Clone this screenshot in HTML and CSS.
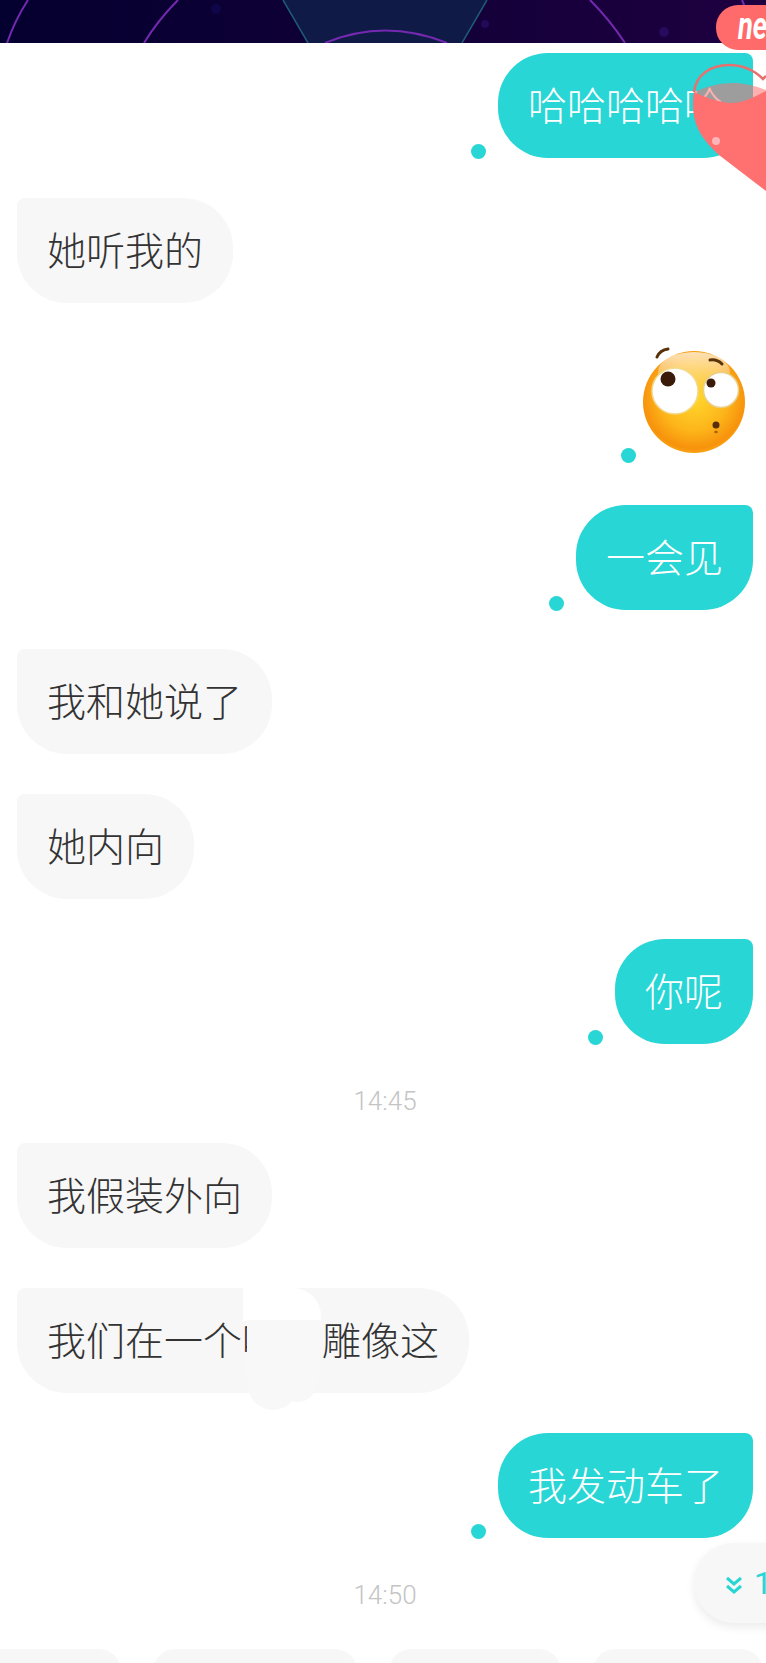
FILE: index.html
```html
<!DOCTYPE html>
<html lang="zh-CN">
<head>
    <meta charset="UTF-8">
    <meta name="viewport" content="width=device-width, initial-scale=1.0">
    <title>Chat</title>
    <link rel="stylesheet" href="styles.css">
</head>
<body>
    <div class="page">
        <div class="chat-header">
            <svg class="header-art" width="766" height="43" viewBox="0 0 766 43">
                <defs>
                    <linearGradient id="headerBg" x1="0" y1="0" x2="1" y2="0">
                        <stop offset="0" stop-color="#04002f"/>
                        <stop offset="1" stop-color="#1e0040"/>
                    </linearGradient>
                </defs>
                <rect width="766" height="43" fill="url(#headerBg)"/>
                <path d="M283 0 L308 43 L462 43 L487 0 Z" fill="#0f1a46"/>
                <path d="M283 0 L308 43 M487 0 L462 43" class="art-teal"/>
                <path d="M28 0 Q15 20 7 43" class="art-arc"/>
                <path d="M178 0 Q158 20 144 43" class="art-arc"/>
                <path d="M325 43 Q385 18 447 43" class="art-arc"/>
                <path d="M590 0 Q610 20 625 43" class="art-arc"/>
                <path d="M742 0 L747 12" class="art-arc"/>
                <circle cx="216" cy="9" r="5" fill="#0e0648"/>
                <circle cx="485" cy="24" r="4" fill="#220a58"/>
                <circle cx="664" cy="32" r="5" fill="#260a5e"/>
            </svg>
        </div>

        <div class="chat-messages">
            <div class="row sent">
                <span class="read-dot"></span>
                <div class="bubble sent-bubble">哈哈哈哈哈</div>
            </div>
            <div class="row received">
                <div class="bubble received-bubble">她听我的</div>
            </div>
            <div class="row sent row-emoji">
                <span class="read-dot emoji-dot"></span>
                <svg class="emoji" width="104" height="104" viewBox="0 0 104 104">
                    <defs>
                        <radialGradient id="faceFill" cx="0.5" cy="0.45" r="0.55">
                            <stop offset="0" stop-color="#ffd92e"/>
                            <stop offset="0.6" stop-color="#fdb51a"/>
                            <stop offset="0.92" stop-color="#f7920c"/>
                            <stop offset="1" stop-color="#f9a414"/>
                        </radialGradient>
                        <linearGradient id="faceShine" x1="0" y1="0" x2="0" y2="1">
                            <stop offset="0" stop-color="#fff" stop-opacity="0.7"/>
                            <stop offset="1" stop-color="#fff" stop-opacity="0"/>
                        </linearGradient>
                    </defs>
                    <circle cx="52" cy="52" r="51" fill="url(#faceFill)"/>
                    <ellipse cx="52" cy="22" rx="36" ry="20" fill="url(#faceShine)"/>
                    <circle cx="33" cy="41" r="23" fill="#fff" stroke="#f3d98e" stroke-width="1.5"/>
                    <circle cx="79" cy="40" r="17.5" fill="#fff" stroke="#e9d08a" stroke-width="1.5"/>
                    <circle cx="26" cy="29" r="7.5" fill="#3a1a08"/>
                    <circle cx="69" cy="33" r="4.5" fill="#3a1a08"/>
                    <circle cx="74" cy="75" r="3.5" fill="#5a2c08"/>
                    <ellipse cx="74" cy="82" rx="1.8" ry="1.2" fill="#a8620c"/>
                    <path d="M15 7 Q18 0 26 -1" class="brow"/>
                    <path d="M68 10 Q75 9 80 14" class="brow"/>
                </svg>
            </div>
            <div class="row sent row-after-emoji">
                <span class="read-dot"></span>
                <div class="bubble sent-bubble">一会见</div>
            </div>
            <div class="row received row-tight">
                <div class="bubble received-bubble">我和她说了</div>
            </div>
            <div class="row received">
                <div class="bubble received-bubble">她内向</div>
            </div>
            <div class="row sent">
                <span class="read-dot"></span>
                <div class="bubble sent-bubble">你呢</div>
            </div>
            <div class="time">14:45</div>
            <div class="row received row-first">
                <div class="bubble received-bubble">我假装外向</div>
            </div>
            <div class="row received">
                <div class="bubble received-bubble">我们在一个<span class="covered-text">喷泉</span>雕像这</div>
            </div>
            <div class="row sent">
                <span class="read-dot"></span>
                <div class="bubble sent-bubble">我发动车了</div>
            </div>
            <div class="time">14:50</div>
        </div>

        <div class="quick-replies">
            <div class="chip chip-first"></div>
            <div class="chip chip-second"></div>
            <div class="chip chip-third"></div>
            <div class="chip chip-fourth"></div>
        </div>

        <div class="new-badge"><span class="new-badge-text">ne</span></div>

        <svg class="heart" width="76" height="132" viewBox="0 0 76 132">
            <path d="M4 32 C6 14 22 5 39 5 C52 5 64 10 73 19 L76 16" class="heart-line"/>
            <path d="M4 32 C18 26 30 23 43 23 C54 23 66 26 76 30 L76 50 L4 50 Z" class="heart-lobe"/>
            <path d="M4 32 C10 35 28 43 42 43 C54 43 66 36 76 31 L76 131 L29 95 C15 82 3 68 3 45 C3 40 3 36 4 32 Z" class="heart-body"/>
            <circle cx="26" cy="81" r="4" class="heart-dot"/>
        </svg>

        <div class="censor censor-top"></div>
        <div class="censor censor-bottom"></div>
        <div class="censor censor-foot-left"></div>
        <div class="censor censor-foot-right"></div>

        <div class="new-messages">
            <svg class="chevrons" width="18" height="18" viewBox="0 0 18 18">
                <path d="M2 2 L9 8 L16 2 M2 10 L9 16 L16 10"/>
            </svg>
            <span>1</span>
        </div>
    </div>
</body>
</html>
```

FILE: styles.css
```css
* {
    margin: 0;
    padding: 0;
    box-sizing: border-box;
}

body {
    background-color: #fff;
    font-family: "Noto Sans CJK SC", "Noto Sans", sans-serif;
}

.page {
    position: relative;
    width: 766px;
    height: 1663px;
    overflow: hidden;
}

.chat-header {
    height: 43px;
}

.header-art {
    display: block;
}

.art-arc {
    fill: none;
    stroke: #7429b0;
    stroke-width: 2;
}

.art-teal {
    fill: none;
    stroke: #1f5a78;
    stroke-width: 1.5;
}

.chat-messages {
    display: flex;
    flex-direction: column;
    height: 1606px;
    padding: 10px 13px 0 17px;
}

.row {
    display: flex;
    align-items: flex-end;
    margin-top: 40px;
}

.row:first-child {
    margin-top: 0;
}

.row.row-first {
    margin-top: 0;
}

.row.row-tight {
    margin-top: 39px;
}

.row.row-emoji {
    margin-top: 47px;
}

.row.row-after-emoji {
    margin-top: 51px;
}

.sent {
    justify-content: flex-end;
    gap: 12px;
}

.received {
    justify-content: flex-start;
}

.bubble {
    height: 105px;
    padding: 0 30px;
    font-size: 39px;
    font-weight: 300;
    line-height: 101px;
    white-space: nowrap;
}

.sent-bubble {
    background-color: #27d6d5;
    color: #fff;
    border-radius: 50px 8px 50px 50px;
}

.received-bubble {
    background-color: #f7f7f7;
    color: #333;
    border-radius: 8px 50px 50px 50px;
}

.covered-text {
    margin-right: 2px;
}

.read-dot {
    width: 15px;
    height: 15px;
    border-radius: 50%;
    background-color: #27d6d5;
    margin-bottom: -1px;
}

.sent .emoji-dot {
    margin-right: -6px;
    margin-bottom: -9px;
}

.emoji {
    display: block;
    overflow: visible;
    margin-right: 7px;
}

.brow {
    fill: none;
    stroke: #5a3208;
    stroke-width: 3;
    stroke-linecap: round;
}

.time {
    height: 30px;
    margin: 42px 0 27px;
    font-family: Roboto, sans-serif;
    font-size: 26px;
    font-weight: 300;
    line-height: 30px;
    text-align: center;
    color: #c4c4c4;
}

.quick-replies {
    display: flex;
    gap: 32px;
    margin-left: -29px;
}

.chip {
    height: 60px;
    flex-shrink: 0;
    background-color: #f7f7f7;
    border-radius: 22px;
}

.chip-first { width: 150px; }
.chip-second { width: 204px; }
.chip-third { width: 172px; }
.chip-fourth { width: 170px; }

.new-badge {
    position: absolute;
    top: 5px;
    left: 716px;
    width: 50px;
    height: 45px;
    padding-left: 22px;
    background-color: #ff6b6b;
    border-radius: 22px 0 0 22px;
    overflow: hidden;
}

.new-badge-text {
    display: inline-block;
    font-family: Roboto, sans-serif;
    font-size: 38px;
    font-weight: 700;
    font-style: italic;
    line-height: 43px;
    color: #fff;
    transform: scaleX(0.72);
    transform-origin: left center;
}

.heart {
    position: absolute;
    top: 60px;
    left: 690px;
}

.heart-line {
    fill: none;
    stroke: #e8716f;
    stroke-width: 2.5;
}

.heart-lobe {
    fill: #ff7070;
    fill-opacity: 0.55;
}

.heart-body {
    fill: #ff7070;
}

.heart-dot {
    fill: #ffb4ba;
}

.censor {
    position: absolute;
}

.censor-top {
    top: 1288px;
    left: 243px;
    width: 78px;
    height: 33px;
    background-color: #fff;
    border-radius: 0 28px 0 0;
}

.censor-bottom {
    top: 1320px;
    left: 247px;
    width: 73px;
    height: 60px;
    background-color: #f8f8f8;
}

.censor-foot-left {
    top: 1372px;
    left: 248px;
    width: 50px;
    height: 38px;
    background-color: #f8f8f8;
    border-radius: 0 0 25px 25px;
}

.censor-foot-right {
    top: 1372px;
    left: 280px;
    width: 36px;
    height: 30px;
    background-color: #f8f8f8;
    border-radius: 0 0 18px 18px;
}

.new-messages {
    position: absolute;
    top: 1543px;
    left: 694px;
    width: 100px;
    height: 80px;
    display: flex;
    align-items: center;
    gap: 11px;
    padding-left: 31px;
    background-color: #f7f7f7;
    border-radius: 40px 0 0 40px;
    box-shadow: 0 4px 10px rgba(0, 0, 0, 0.08);
    font-family: Roboto, sans-serif;
    font-size: 32px;
    color: #27d6d5;
}

.chevrons {
    display: block;
    margin-top: 4px;
    fill: none;
    stroke: #27d6d5;
    stroke-width: 3;
}
```
